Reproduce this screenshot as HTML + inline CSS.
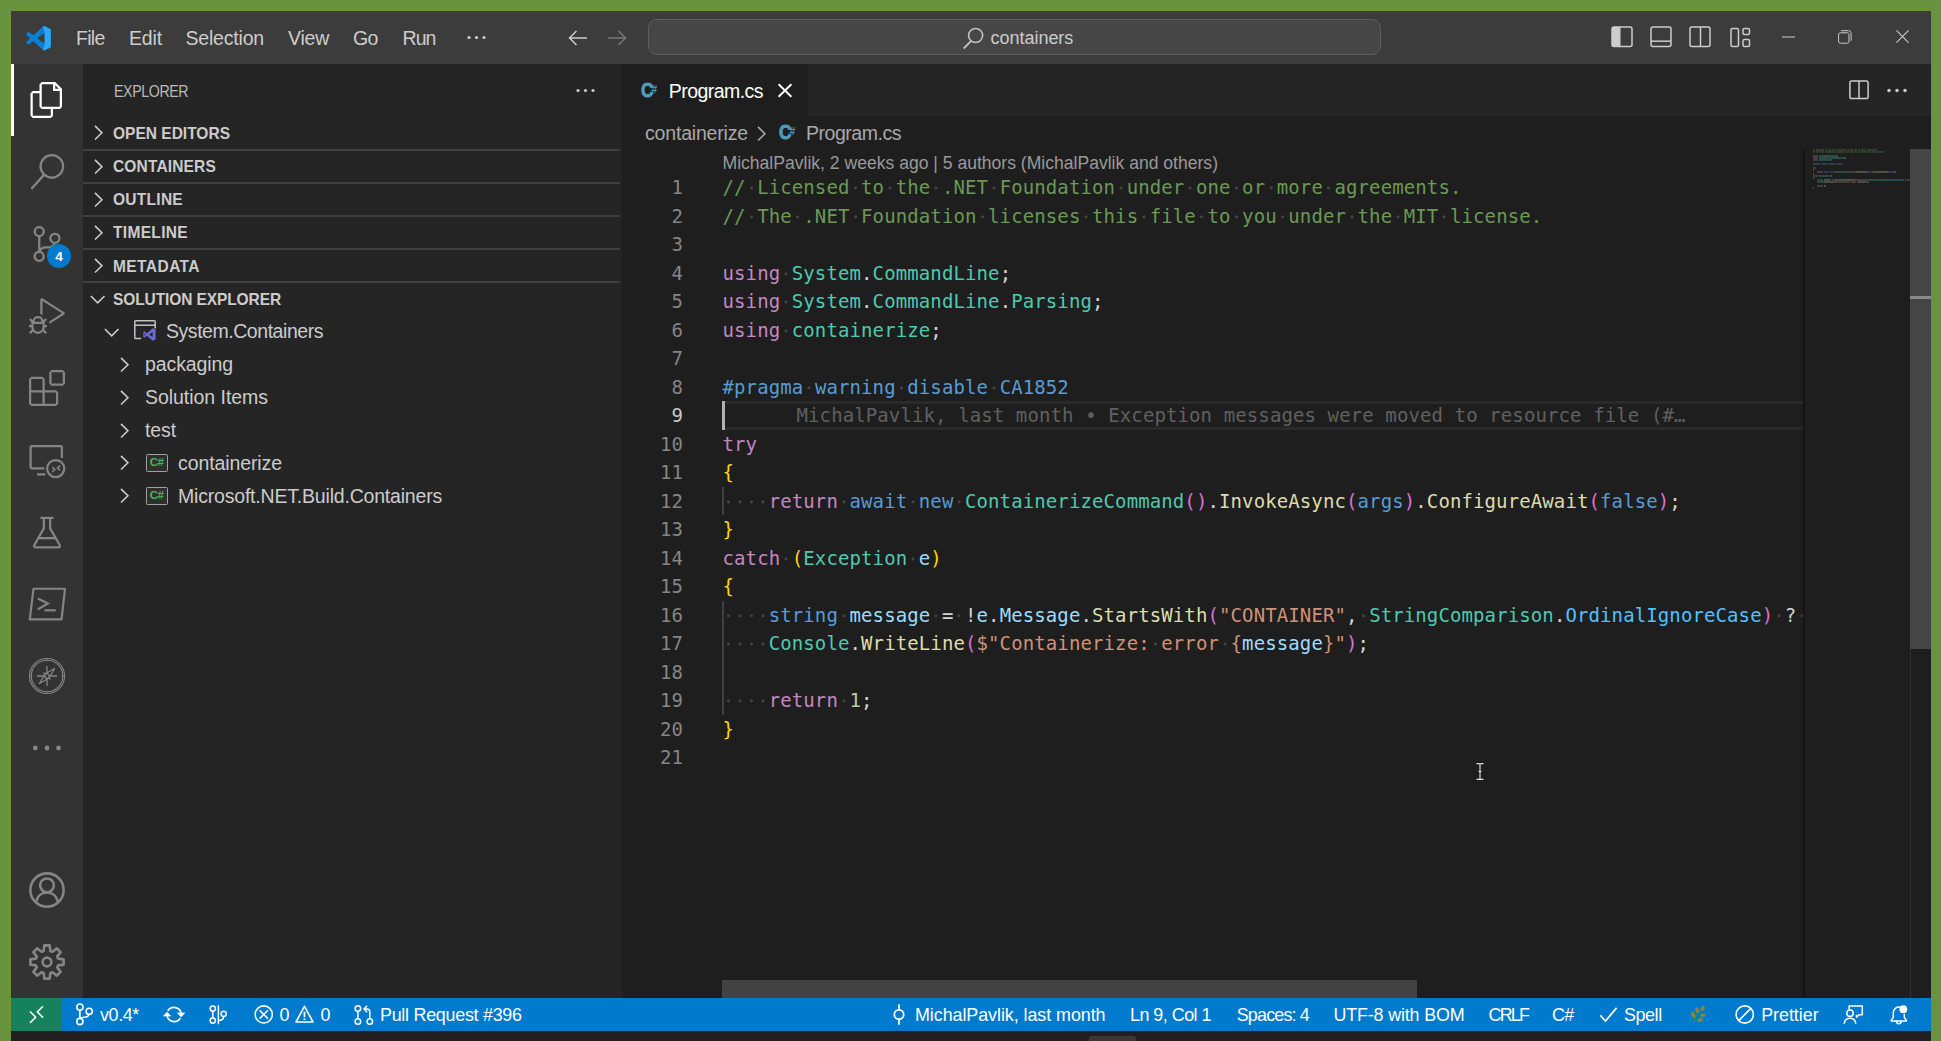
<!DOCTYPE html>
<html lang="en">
<head>
<meta charset="utf-8">
<title>Program.cs - containers - Visual Studio Code</title>
<style>
*{box-sizing:border-box;margin:0;padding:0}
html,body{width:1941px;height:1041px;overflow:hidden;background:#6a9340}
body{position:relative;font-family:"Liberation Sans",sans-serif;color:#cccccc}
.a{position:absolute}
.t{position:absolute;white-space:pre;display:block}
svg{position:absolute;overflow:visible;display:block}

.csproj{width:22px;height:18.5px;border:1.5px solid #a0a0a0;border-radius:1.5px;background:#2f2f30}
.csproj span{position:absolute;left:0;top:0;width:19px;height:15.5px;line-height:15.5px;text-align:center;font-size:11.5px;font-weight:700;color:#3fb950;letter-spacing:-0.6px}

.ln,.cl{position:absolute;height:28.5px;line-height:29.34px;font-family:"DejaVu Sans Mono","Liberation Mono",monospace;font-size:19.0px;letter-spacing:0.1070px;white-space:pre}
.ln{left:0.99px;width:60px;text-align:right}
.cl{left:100.50px}
.cl i{font-style:normal;background:radial-gradient(circle at 50% 54%,#424242 0,#424242 1.1px,rgba(66,66,66,0) 1.9px)}
.blame{color:#606060}
.c0{color:#6a9955}
.c1{color:#c586c0}
.c2{color:#d4d4d4}
.c3{color:#4ec9b0}
.c4{color:#569cd6}
.c5{color:#ffd700}
.c6{color:#da70d6}
.c7{color:#dcdcaa}
.c8{color:#9cdcfe}
.c9{color:#ce9178}
.c10{color:#4fc1ff}
.c11{color:#b5cea8}
</style>
</head>
<body>
<div id="win" class="a" style="left:11.00px;top:11.00px;width:1920px;height:1020px;background:#1e1e1e;overflow:hidden">
<div id="titlebar" class="a" style="left:0.00px;top:0.00px;width:1920px;height:53px;background:#3c3c3c">
<svg style="left:15.00px;top:15.00px" width="25" height="24.5" viewBox="0 0 100 100" ><path fill="#0b7fd1" d="M96.46 10.8 75.86.88a6.23 6.23 0 0 0-7.11 1.2L29.35 38.04 12.19 25.02a4.16 4.16 0 0 0-5.32.23l-5.5 5.01a4.17 4.17 0 0 0 0 6.17L16.25 50 1.36 63.57a4.17 4.17 0 0 0 0 6.17l5.51 5.01a4.16 4.16 0 0 0 5.32.23l17.16-13.02 39.4 35.96a6.23 6.23 0 0 0 7.11 1.2l20.61-9.92A6.25 6.25 0 0 0 100 83.57V16.43a6.25 6.25 0 0 0-3.54-5.63ZM75.02 72.7 45.1 50l29.92-22.7Z"/><path fill="#2aa7f5" d="M75.86.88a6.23 6.23 0 0 0-7.11 1.2l6.27 25.22V72.7L68.75 97.92a6.23 6.23 0 0 0 7.11 1.2l20.61-9.92A6.25 6.25 0 0 0 100 83.57V16.43a6.25 6.25 0 0 0-3.54-5.63Z"/></svg>
<span class="t" id="t1" style="left:65.00px;top:15.14px;height:25px;line-height:25px;font-size:19.5px;color:#cccccc;letter-spacing:-0.730px;">File</span>
<span class="t" id="t2" style="left:118.00px;top:15.14px;height:25px;line-height:25px;font-size:19.5px;color:#cccccc;letter-spacing:-0.152px;">Edit</span>
<span class="t" id="t3" style="left:174.50px;top:15.14px;height:25px;line-height:25px;font-size:19.5px;color:#cccccc;letter-spacing:-0.191px;">Selection</span>
<span class="t" id="t4" style="left:277.00px;top:15.14px;height:25px;line-height:25px;font-size:19.5px;color:#cccccc;letter-spacing:-0.230px;">View</span>
<span class="t" id="t5" style="left:342.00px;top:15.14px;height:25px;line-height:25px;font-size:19.5px;color:#cccccc;letter-spacing:-0.758px;">Go</span>
<span class="t" id="t6" style="left:391.50px;top:15.14px;height:25px;line-height:25px;font-size:19.5px;color:#cccccc;letter-spacing:-0.927px;">Run</span>
<svg style="left:456.00px;top:24.00px" width="19" height="5" viewBox="0 0 19 5" ><circle cx="2" cy="2.5" r="1.6" fill="#ccc"/><circle cx="9.5" cy="2.5" r="1.6" fill="#ccc"/><circle cx="17" cy="2.5" r="1.6" fill="#ccc"/></svg>
<svg style="left:557.00px;top:19.00px" width="19" height="16" viewBox="0 0 19 16" ><path d="M19 8H1.5M8.5 1 1.5 8l7 7" fill="none" stroke="#cccccc" stroke-width="1.5"/></svg>
<svg style="left:597.00px;top:19.00px" width="19" height="16" viewBox="0 0 19 16" ><path d="M0 8h17.5M10.5 1l7 7-7 7" fill="none" stroke="#777777" stroke-width="1.5"/></svg>
<div id="cmdcenter" class="a" style="left:637.00px;top:8.00px;width:733px;height:35.5px;background:#464646;border:1.5px solid #5d5d5d;border-radius:9px">
<svg style="left:313.00px;top:7.00px" width="22" height="23" viewBox="961 26 22 23" ><circle cx="974.600" cy="34.500" r="7" fill="none" stroke="#c2c2c2" stroke-width="1.6"/><path d="M970.100 39.900 962.700 47.500" stroke="#c2c2c2" stroke-width="1.8" fill="none"/></svg>
<span class="t" id="t7" style="left:341.60px;top:6.86px;height:23px;line-height:23px;font-size:18px;color:#cccccc;letter-spacing:-0.036px;">containers</span>
</div>
<svg style="left:1600.00px;top:15.00px" width="22" height="21.5" viewBox="0 0 22 21.5" ><rect x="1" y="1" width="20" height="19.5" rx="2" fill="none" stroke="#ccc" stroke-width="1.5"/><path d="M1 1h8.5v19.5H1z" fill="#ccc"/></svg>
<svg style="left:1639.00px;top:15.00px" width="22" height="21.5" viewBox="0 0 22 21.5" ><rect x="1" y="1" width="20" height="19.5" rx="2" fill="none" stroke="#ccc" stroke-width="1.5"/><path d="M1 15.200h20" stroke="#ccc" stroke-width="1.500"/></svg>
<svg style="left:1678.00px;top:15.00px" width="22" height="21.5" viewBox="0 0 22 21.5" ><rect x="1" y="1" width="20" height="19.5" rx="2" fill="none" stroke="#ccc" stroke-width="1.5"/><path d="M11.5 1v19.5" stroke="#ccc" stroke-width="1.5"/></svg>
<svg style="left:1718.50px;top:15.50px" width="21" height="21" viewBox="0 0 21 21" ><rect x="1" y="1.5" width="7.5" height="18" rx="1.5" fill="none" stroke="#ccc" stroke-width="1.5"/><rect x="13" y="1.5" width="6.5" height="6" rx="1.5" fill="none" stroke="#ccc" stroke-width="1.5"/><rect x="13" y="12.5" width="6.5" height="7" rx="1.5" fill="none" stroke="#ccc" stroke-width="1.5"/></svg>
<svg style="left:1771.00px;top:25.00px" width="13" height="2" viewBox="0 0 13 2" ><path d="M0 1h13" stroke="#ccc" stroke-width="1"/></svg>
<svg style="left:1827.00px;top:19.00px" width="14" height="14" viewBox="0 0 14 14" ><rect x=".6" y="2.8" width="10.4" height="10.4" rx="1.800" fill="none" stroke="#ccc" stroke-width="1"/><path d="M3 .7h7.500a2.600 2.600 0 0 1 2.600 2.600v7.500" fill="none" stroke="#ccc" stroke-width="1"/></svg>
<svg style="left:1885.00px;top:19.00px" width="13" height="13" viewBox="0 0 13 13" ><path d="M.4.4l12.2 12.2M12.6.4.4 12.6" stroke="#ccc" stroke-width="1.100"/></svg>
</div>
<div id="activitybar" class="a" style="left:0.00px;top:53.00px;width:72px;height:934px;background:#333333">
<div class="a" style="left:0.00px;top:0.00px;width:3px;height:72px;background:#ffffff;"></div>
<svg style="left:18.00px;top:18.00px" width="36" height="36" viewBox="0 0 24 24" fill="#ffffff"><path d="M17.5 0h-9L7 1.5V6H2.5L1 7.5v15.07L2.5 24h12.07L16 22.57V18h4.7l1.3-1.43V4.5L17.5 0zm0 2.12l2.38 2.38H17.5V2.12zm-3 20.38h-12v-15H7v9.07L8.5 18h6v4.5zm6-6h-12v-15H16V6h4.5v10.5z"/></svg>
<svg style="left:18.00px;top:90.00px" width="36" height="36" viewBox="0 0 24 24" fill="#858585"><path d="M15.25 0a8.25 8.25 0 0 0-6.18 13.72L1 22.88l1.12 1 8.05-9.12A8.251 8.251 0 1 0 15.25.01V0zm0 15a6.75 6.75 0 1 1 0-13.5 6.75 6.75 0 0 1 0 13.5z"/></svg>
<svg style="left:18.00px;top:162.00px" width="36" height="36" viewBox="0 0 24 24" fill="#858585"><path d="M21.007 8.222A3.738 3.738 0 0 0 15.045 5.2a3.737 3.737 0 0 0 1.156 6.583 2.988 2.988 0 0 1-2.668 1.67h-2.99a4.456 4.456 0 0 0-2.989 1.165V7.4a3.737 3.737 0 1 0-1.494 0v9.117a3.776 3.776 0 1 0 1.816.099 2.99 2.99 0 0 1 2.668-1.667h2.99a4.484 4.484 0 0 0 4.223-3.039 3.736 3.736 0 0 0 3.25-3.687zM4.565 3.738a2.242 2.242 0 1 1 4.484 0 2.242 2.242 0 0 1-4.484 0zm4.484 16.441a2.242 2.242 0 1 1-4.484 0 2.242 2.242 0 0 1 4.484 0zm8.221-9.715a2.242 2.242 0 1 1 0-4.485 2.242 2.242 0 0 1 0 4.485z"/></svg>
<div class="a" id="scmbadge" style="left:36px;top:179.5px;width:24px;height:24px;border-radius:12px;background:#007acc;color:#fff;font-size:13.5px;font-weight:700;text-align:center;line-height:25.5px">4</div>
<svg style="left:18.00px;top:234.00px" width="36" height="36" viewBox="0 0 24 24" fill="#858585"><path d="M10.94 13.5l-1.32 1.32a3.73 3.73 0 0 0-7.24 0L1.06 13.5 0 14.56l1.72 1.72-.22.22V18H0v1.5h1.5v.08c.077.489.214.966.41 1.42L0 22.94 1.06 24l1.65-1.65A4.308 4.308 0 0 0 6 24a4.31 4.31 0 0 0 3.29-1.65L10.94 24 12 22.94 10.09 21c.198-.464.336-.951.41-1.45v-.1H12V18h-1.5v-1.5l-.22-.22L12 14.56l-1.06-1.06zM6 13.5a2.25 2.25 0 0 1 2.25 2.25h-4.5A2.25 2.25 0 0 1 6 13.5zm3 6a3.33 3.33 0 0 1-3 3 3.33 3.33 0 0 1-3-3v-2.25h6v2.25zm14.76-9.9v1.26L13.5 17.37V15.6l8.5-5.37L9 2v9.46a5.07 5.07 0 0 0-1.5-.72V.63L8.64 0l15.12 9.6z"/></svg>
<svg style="left:18.00px;top:306.00px" width="36" height="36" viewBox="0 0 24 24" fill="#858585"><path d="M13.5 1.5L15 0h7.5L24 1.5V9l-1.5 1.5H15L13.5 9V1.5zm1.5 0V9h7.5V1.5H15zM0 15V6l1.5-1.5H9L10.5 6v7.5H18l1.5 1.5v7.5L18 24H1.5L0 22.5V15zm9-1.5V6H1.5v7.5H9zM9 15H1.5v7.5H9V15zm1.5 7.5H18V15h-7.5v7.5z"/></svg>
<svg style="left:18.00px;top:378.00px" width="36" height="36" viewBox="0 0 24 24" fill="#858585"><g fill="none" stroke="#858585" stroke-width="1.5"><path d="M10.300 17.500H1.900a.85.85 0 0 1-.85-.85V3.550a.85.85 0 0 1 .85-.85h19.150a.85.85 0 0 1 .85.85v7.150"/><path d="M5.300 21.600h5.600"/><circle cx="17.800" cy="17.700" r="5.700"/><path d="M15.500 16.800l1.700 1.600-1.700 1.600M20.700 15.800l-1.700 1.600 1.700 1.600" stroke-width="1.100"/></g></svg>
<svg style="left:18.00px;top:450.00px" width="36" height="36" viewBox="0 0 24 24" fill="#858585"><g fill="none" stroke="#858585" stroke-width="1.5" stroke-linejoin="round"><path d="M7.600 2.600h8.800"/><path d="M9.900 2.600v7L3.500 20.800a1 1 0 0 0 .9 1.500h15.200a1 1 0 0 0 .9-1.500L14.100 9.600v-7"/><path d="M6 16.100h12"/></g></svg>
<svg style="left:18.00px;top:522.00px" width="36" height="36" viewBox="0 0 24 24" fill="#858585"><g fill="none" stroke="#858585" stroke-width="1.45" stroke-linejoin="round"><path d="M3 1.850h21l-2.300 20.400H.5z"/><path d="M5.900 8.300l6.700 3.400-6.700 3.900" stroke-linejoin="miter"/><path d="M10.300 16.200h7.500"/></g></svg>
<svg style="left:18.00px;top:594.00px" width="36" height="36" viewBox="0 0 24 24" fill="#858585"><g fill="none" stroke="#858585"><circle cx="12" cy="12" r="11.700" stroke-width="0.75"/><circle cx="12" cy="12" r="10.500" stroke-width="0.75"/><path d="M12 5.300v13.400M5.300 12h13.400" stroke-width="0.900"/><path d="M9.600 9.600l4.800 4.800" stroke-width="0.700"/><path d="M17.200 6.800 13.300 13.300 6.800 17.200 10.700 10.700z" stroke-width="0.800"/><circle cx="12" cy="12" r="1.500" stroke-width="0.800" fill="#333"/><path d="M12 .8v1.400M12 21.800v1.400M.8 12h1.400M21.800 12h1.400" stroke-width=".7"/></g></svg>
<svg style="left:18.00px;top:666.00px" width="36" height="36" viewBox="0 0 36 36" ><circle cx="6.3" cy="18" r="2.4" fill="#858585"/><circle cx="18" cy="18" r="2.4" fill="#858585"/><circle cx="29.5" cy="18" r="2.4" fill="#858585"/></svg>
<svg style="left:18.00px;top:808.00px" width="36" height="36" viewBox="0 0 24 24" ><g fill="none" stroke="#858585" stroke-width="1.7"><circle cx="12" cy="12" r="11.100"/><circle cx="12" cy="8.900" r="4.600"/><path d="M4.700 19.800c.9-3.700 3.700-6.200 7.300-6.200s6.400 2.500 7.300 6.200"/></g></svg>
<svg style="left:18.00px;top:880.00px" width="36" height="36" viewBox="0 0 24 24" ><g fill="none" stroke="#858585" stroke-width="1.75" stroke-linejoin="round"><path d="M19.36 9.74L23.06 10.25L23.06 13.75L19.36 14.26L18.80 15.60L21.06 18.58L18.58 21.06L15.60 18.80L14.26 19.36L13.75 23.06L10.25 23.06L9.74 19.36L8.40 18.80L5.42 21.06L2.94 18.58L5.20 15.60L4.64 14.26L0.94 13.75L0.94 10.25L4.64 9.74L5.20 8.40L2.94 5.42L5.42 2.94L8.40 5.20L9.74 4.64L10.25 0.94L13.75 0.94L14.26 4.64L15.60 5.20L18.58 2.94L21.06 5.42L18.80 8.40Z"/><circle cx="12" cy="12" r="2.900"/></g></svg>
</div>
<div id="sidebar" class="a" style="left:72.00px;top:53.00px;width:539px;height:934px;background:#252526">
<span class="t" id="t8" style="left:30.75px;top:16.78px;height:21px;line-height:21px;font-size:16.5px;color:#bbbbbb;letter-spacing:-0.442px;transform:scaleX(0.86);transform-origin:0 50%;">EXPLORER</span>
<svg style="left:493.00px;top:23.50px" width="19" height="5" viewBox="0 0 19 5" ><circle cx="2" cy="2.5" r="1.6" fill="#ccc"/><circle cx="9.5" cy="2.5" r="1.6" fill="#ccc"/><circle cx="17" cy="2.5" r="1.6" fill="#ccc"/></svg>
<span class="t" id="t9" style="left:30.00px;top:58.78px;height:21px;line-height:21px;font-size:16.5px;color:#cccccc;font-weight:700;letter-spacing:0.006px;transform:scaleX(0.94);transform-origin:0 50%;">OPEN EDITORS</span>
<svg style="left:11.00px;top:61.30px" width="9" height="15.4" viewBox="0 0 9 15.400" ><path d="M1 .9 7.900 7.700 1 14.500" fill="none" stroke="#cccccc" stroke-width="1.6"/></svg>
<div class="a" style="left:0.00px;top:84.70px;width:537px;height:2px;background:#3f3f40;"></div>
<span class="t" id="t10" style="left:30.00px;top:91.98px;height:21px;line-height:21px;font-size:16.5px;color:#cccccc;font-weight:700;letter-spacing:0.170px;transform:scaleX(0.94);transform-origin:0 50%;">CONTAINERS</span>
<svg style="left:11.00px;top:94.50px" width="9" height="15.4" viewBox="0 0 9 15.400" ><path d="M1 .9 7.900 7.700 1 14.500" fill="none" stroke="#cccccc" stroke-width="1.6"/></svg>
<div class="a" style="left:0.00px;top:117.85px;width:537px;height:2px;background:#3f3f40;"></div>
<span class="t" id="t11" style="left:30.00px;top:125.18px;height:21px;line-height:21px;font-size:16.5px;color:#cccccc;font-weight:700;letter-spacing:0.292px;transform:scaleX(0.94);transform-origin:0 50%;">OUTLINE</span>
<svg style="left:11.00px;top:127.70px" width="9" height="15.4" viewBox="0 0 9 15.400" ><path d="M1 .9 7.900 7.700 1 14.500" fill="none" stroke="#cccccc" stroke-width="1.6"/></svg>
<div class="a" style="left:0.00px;top:151.00px;width:537px;height:2px;background:#3f3f40;"></div>
<span class="t" id="t12" style="left:30.00px;top:158.38px;height:21px;line-height:21px;font-size:16.5px;color:#cccccc;font-weight:700;letter-spacing:0.348px;transform:scaleX(0.94);transform-origin:0 50%;">TIMELINE</span>
<svg style="left:11.00px;top:160.90px" width="9" height="15.4" viewBox="0 0 9 15.400" ><path d="M1 .9 7.900 7.700 1 14.500" fill="none" stroke="#cccccc" stroke-width="1.6"/></svg>
<div class="a" style="left:0.00px;top:184.15px;width:537px;height:2px;background:#3f3f40;"></div>
<span class="t" id="t13" style="left:30.00px;top:191.58px;height:21px;line-height:21px;font-size:16.5px;color:#cccccc;font-weight:700;letter-spacing:0.456px;transform:scaleX(0.94);transform-origin:0 50%;">METADATA</span>
<svg style="left:11.00px;top:194.10px" width="9" height="15.4" viewBox="0 0 9 15.400" ><path d="M1 .9 7.900 7.700 1 14.500" fill="none" stroke="#cccccc" stroke-width="1.6"/></svg>
<div class="a" style="left:0.00px;top:217.30px;width:537px;height:2px;background:#3f3f40;"></div>
<span class="t" id="t14" style="left:30.00px;top:224.78px;height:21px;line-height:21px;font-size:16.5px;color:#cccccc;font-weight:700;letter-spacing:-0.111px;transform:scaleX(0.94);transform-origin:0 50%;">SOLUTION EXPLORER</span>
<svg style="left:7.30px;top:230.70px" width="15.4" height="9" viewBox="0 0 15.400 9" ><path d="M.9 1 7.700 7.900 14.500 1" fill="none" stroke="#cccccc" stroke-width="1.6"/></svg>
<svg style="left:21.30px;top:263.70px" width="15.4" height="9" viewBox="0 0 15.400 9" ><path d="M.9 1 7.700 7.900 14.500 1" fill="none" stroke="#cccccc" stroke-width="1.6"/></svg>
<svg style="left:51.00px;top:256.00px" width="22" height="21" viewBox="0 0 22 21" ><path d="M.8 16.5V1.6a.8.8 0 0 1 .8-.8h18.8a.8.8 0 0 1 .8.8v7" fill="none" stroke="#c5c5c5" stroke-width="1.5"/><path d="M.8 5.2h20.4" stroke="#c5c5c5" stroke-width="1.5"/><path d="M.8 16.5v1.2a.8.8 0 0 0 .8.8h5.5" fill="none" stroke="#c5c5c5" stroke-width="1.5"/><path d="M21.6 9.400 18.700 8.200 12.900 13.200 10.400 11.300 9.300 11.800v5.400l1.100.5 2.500-1.900 5.800 5 2.900-1.200zM18.600 12v5l-3.300-2.500zM10.500 15.800v-2.600l1.400 1.300z" fill="#6a6ad6"/></svg>
<span class="t" id="t15" style="left:83.00px;top:254.74px;height:25px;line-height:25px;font-size:19.5px;color:#cccccc;letter-spacing:-0.455px;">System.Containers</span>
<svg style="left:36.80px;top:292.50px" width="9" height="15.4" viewBox="0 0 9 15.400" ><path d="M1 .9 7.900 7.700 1 14.500" fill="none" stroke="#cccccc" stroke-width="1.6"/></svg>
<span class="t" id="t16" style="left:62.00px;top:287.94px;height:25px;line-height:25px;font-size:19.5px;color:#cccccc;letter-spacing:-0.101px;">packaging</span>
<svg style="left:36.80px;top:325.50px" width="9" height="15.4" viewBox="0 0 9 15.400" ><path d="M1 .9 7.900 7.700 1 14.500" fill="none" stroke="#cccccc" stroke-width="1.6"/></svg>
<span class="t" id="t17" style="left:62.00px;top:320.94px;height:25px;line-height:25px;font-size:19.5px;color:#cccccc;letter-spacing:-0.040px;">Solution Items</span>
<svg style="left:36.80px;top:358.50px" width="9" height="15.4" viewBox="0 0 9 15.400" ><path d="M1 .9 7.900 7.700 1 14.500" fill="none" stroke="#cccccc" stroke-width="1.6"/></svg>
<span class="t" id="t18" style="left:62.00px;top:353.94px;height:25px;line-height:25px;font-size:19.5px;color:#cccccc;letter-spacing:-0.109px;">test</span>
<svg style="left:36.80px;top:391.40px" width="9" height="15.4" viewBox="0 0 9 15.400" ><path d="M1 .9 7.900 7.700 1 14.500" fill="none" stroke="#cccccc" stroke-width="1.6"/></svg>
<div class="a csproj" style="left:63px;top:389.90px"><span>C#</span></div>
<span class="t" id="t19" style="left:95.00px;top:386.84px;height:25px;line-height:25px;font-size:19.5px;color:#cccccc;letter-spacing:-0.096px;">containerize</span>
<svg style="left:36.80px;top:424.40px" width="9" height="15.4" viewBox="0 0 9 15.400" ><path d="M1 .9 7.900 7.700 1 14.500" fill="none" stroke="#cccccc" stroke-width="1.6"/></svg>
<div class="a csproj" style="left:63px;top:422.90px"><span>C#</span></div>
<span class="t" id="t20" style="left:95.00px;top:419.84px;height:25px;line-height:25px;font-size:19.5px;color:#cccccc;letter-spacing:-0.195px;">Microsoft.NET.Build.Containers</span>
</div>
<div id="editor" class="a" style="left:611.00px;top:53.00px;width:1309px;height:934px;background:#1e1e1e;overflow:hidden">
<div id="tabs" class="a" style="left:0.00px;top:0.00px;width:1309px;height:52px;background:#252526">
<div id="tab-active" class="a" style="left:0.00px;top:0.00px;width:186px;height:52px;background:#1e1e1e">
<span class="t" id="t21" style="left:19.30px;top:14.01px;height:25px;line-height:25px;font-size:19.6px;color:#519aba;font-weight:700;transform:scaleX(0.88);transform-origin:0 50%;-webkit-text-stroke:0.9px #519aba;">C</span>
<span class="t" id="t22" style="left:29.40px;top:18.53px;height:13px;line-height:13px;font-size:10px;color:#519aba;font-weight:700;">#</span>
<span class="t" id="t23" style="left:46.75px;top:14.94px;height:25px;line-height:25px;font-size:19.5px;color:#ffffff;letter-spacing:-0.545px;">Program.cs</span>
<svg style="left:156.00px;top:20.00px" width="14" height="13" viewBox="0 0 14 13" ><path d="M.6.3l12.800 12.400M13.400.300.600 12.700" stroke="#fff" stroke-width="1.9"/></svg>
</div>
<svg style="left:1226.50px;top:15.50px" width="20" height="19.5" viewBox="0 0 20 19.5" ><rect x=".9" y=".9" width="18.2" height="17.7" rx="1.8" fill="none" stroke="#ccc" stroke-width="1.5"/><path d="M10 .9v17.700" stroke="#ccc" stroke-width="1.5"/></svg>
<svg style="left:1265.00px;top:23.50px" width="20" height="5" viewBox="0 0 20 5" ><circle cx="2" cy="2.5" r="1.7" fill="#ccc"/><circle cx="10" cy="2.5" r="1.7" fill="#ccc"/><circle cx="18" cy="2.5" r="1.7" fill="#ccc"/></svg>
</div>
<div id="breadcrumbs" class="a" style="left:0.00px;top:52.00px;width:1309px;height:33.5px;background:#1e1e1e">
<span class="t" id="t24" style="left:23.00px;top:4.94px;height:25px;line-height:25px;font-size:19.5px;color:#a9a9a9;letter-spacing:-0.180px;">containerize</span>
<svg style="left:135.00px;top:9.50px" width="9" height="15.4" viewBox="0 0 9 15.400" ><path d="M1 .9 7.900 7.700 1 14.500" fill="none" stroke="#a9a9a9" stroke-width="1.6"/></svg>
<span class="t" id="t25" style="left:157.30px;top:4.41px;height:25px;line-height:25px;font-size:19.6px;color:#519aba;font-weight:700;transform:scaleX(0.88);transform-origin:0 50%;-webkit-text-stroke:0.9px #519aba;">C</span>
<span class="t" id="t26" style="left:167.40px;top:8.93px;height:13px;line-height:13px;font-size:10px;color:#519aba;font-weight:700;">#</span>
<span class="t" id="t27" style="left:184.00px;top:4.94px;height:25px;line-height:25px;font-size:19.5px;color:#a9a9a9;letter-spacing:-0.470px;">Program.cs</span>
</div>
<div id="code" class="a" style="left:0.00px;top:85.50px;width:1181px;height:830.5px;overflow:hidden">
<span class="t" id="codelens" style="left:100.50px;top:2.30px;height:23px;line-height:23px;font-size:17.6px;color:#999999;letter-spacing:-0.015px;">MichalPavlik, 2 weeks ago | 5 authors (MichalPavlik and others)</span>
<div class="a" style="left:100.00px;top:251.50px;width:1081px;height:29px;background:transparent;border-top:3px solid #2a2a2a;border-bottom:3px solid #2a2a2a"></div>
<div class="a" style="left:100.00px;top:251.50px;width:3px;height:29px;background:#b4adb3;"></div>
<div class="a" style="left:100.30px;top:337.25px;width:1.5px;height:28.5px;background:#404040;"></div>
<div class="a" style="left:100.30px;top:451.25px;width:1.5px;height:114.0px;background:#404040;"></div>
<div class="ln" style="top:23.75px;color:#858585">1</div>
<div class="cl" style="top:23.75px"><span class="c0">//<i> </i>Licensed<i> </i>to<i> </i>the<i> </i>.NET<i> </i>Foundation<i> </i>under<i> </i>one<i> </i>or<i> </i>more<i> </i>agreements.</span></div>
<div class="ln" style="top:52.25px;color:#858585">2</div>
<div class="cl" style="top:52.25px"><span class="c0">//<i> </i>The<i> </i>.NET<i> </i>Foundation<i> </i>licenses<i> </i>this<i> </i>file<i> </i>to<i> </i>you<i> </i>under<i> </i>the<i> </i>MIT<i> </i>license.</span></div>
<div class="ln" style="top:80.75px;color:#858585">3</div>
<div class="ln" style="top:109.25px;color:#858585">4</div>
<div class="cl" style="top:109.25px"><span class="c1">using</span><span class="c2"><i> </i></span><span class="c3">System</span><span class="c2">.</span><span class="c3">CommandLine</span><span class="c2">;</span></div>
<div class="ln" style="top:137.75px;color:#858585">5</div>
<div class="cl" style="top:137.75px"><span class="c1">using</span><span class="c2"><i> </i></span><span class="c3">System</span><span class="c2">.</span><span class="c3">CommandLine</span><span class="c2">.</span><span class="c3">Parsing</span><span class="c2">;</span></div>
<div class="ln" style="top:166.25px;color:#858585">6</div>
<div class="cl" style="top:166.25px"><span class="c1">using</span><span class="c2"><i> </i></span><span class="c3">containerize</span><span class="c2">;</span></div>
<div class="ln" style="top:194.75px;color:#858585">7</div>
<div class="ln" style="top:223.25px;color:#858585">8</div>
<div class="cl" style="top:223.25px"><span class="c4">#pragma<i> </i>warning<i> </i>disable<i> </i>CA1852</span></div>
<div class="ln" style="top:251.75px;color:#c6c6c6">9</div>
<div class="cl blame" style="top:251.75px;left:174.50px">MichalPavlik, last month • Exception messages were moved to resource file (#…</div>
<div class="ln" style="top:280.25px;color:#858585">10</div>
<div class="cl" style="top:280.25px"><span class="c1">try</span></div>
<div class="ln" style="top:308.75px;color:#858585">11</div>
<div class="cl" style="top:308.75px"><span class="c5">{</span></div>
<div class="ln" style="top:337.25px;color:#858585">12</div>
<div class="cl" style="top:337.25px"><span class="c2"><i> </i><i> </i><i> </i><i> </i></span><span class="c1">return</span><span class="c2"><i> </i></span><span class="c4">await</span><span class="c2"><i> </i></span><span class="c4">new</span><span class="c2"><i> </i></span><span class="c3">ContainerizeCommand</span><span class="c6">()</span><span class="c2">.</span><span class="c7">InvokeAsync</span><span class="c6">(</span><span class="c4">args</span><span class="c6">)</span><span class="c2">.</span><span class="c7">ConfigureAwait</span><span class="c6">(</span><span class="c4">false</span><span class="c6">)</span><span class="c2">;</span></div>
<div class="ln" style="top:365.75px;color:#858585">13</div>
<div class="cl" style="top:365.75px"><span class="c5">}</span></div>
<div class="ln" style="top:394.25px;color:#858585">14</div>
<div class="cl" style="top:394.25px"><span class="c1">catch</span><span class="c2"><i> </i></span><span class="c5">(</span><span class="c3">Exception</span><span class="c2"><i> </i></span><span class="c8">e</span><span class="c5">)</span></div>
<div class="ln" style="top:422.75px;color:#858585">15</div>
<div class="cl" style="top:422.75px"><span class="c5">{</span></div>
<div class="ln" style="top:451.25px;color:#858585">16</div>
<div class="cl" style="top:451.25px"><span class="c2"><i> </i><i> </i><i> </i><i> </i></span><span class="c4">string</span><span class="c2"><i> </i></span><span class="c8">message</span><span class="c2"><i> </i></span><span class="c2">=</span><span class="c2"><i> </i></span><span class="c2">!</span><span class="c8">e</span><span class="c2">.</span><span class="c8">Message</span><span class="c2">.</span><span class="c7">StartsWith</span><span class="c6">(</span><span class="c9">"CONTAINER"</span><span class="c2">,</span><span class="c2"><i> </i></span><span class="c3">StringComparison</span><span class="c2">.</span><span class="c10">OrdinalIgnoreCase</span><span class="c6">)</span><span class="c2"><i> </i></span><span class="c2">?</span><span class="c2"><i> </i></span><span class="c9">$"CONTAINER9000:<i> </i>"</span><span class="c2"><i> </i></span><span class="c2">+</span><span class="c2"><i> </i></span><span class="c8">e</span><span class="c2">.</span><span class="c7">ToString</span><span class="c6">()</span><span class="c2"><i> </i></span><span class="c2">:</span><span class="c2"><i> </i></span><span class="c8">e</span><span class="c2">.</span><span class="c7">ToString</span><span class="c6">()</span><span class="c2">;</span></div>
<div class="ln" style="top:479.75px;color:#858585">17</div>
<div class="cl" style="top:479.75px"><span class="c2"><i> </i><i> </i><i> </i><i> </i></span><span class="c3">Console</span><span class="c2">.</span><span class="c7">WriteLine</span><span class="c6">(</span><span class="c9">$"Containerize:<i> </i>error<i> </i></span><span class="c9">{</span><span class="c8">message</span><span class="c9">}</span><span class="c9">"</span><span class="c6">)</span><span class="c2">;</span></div>
<div class="ln" style="top:508.25px;color:#858585">18</div>
<div class="ln" style="top:536.75px;color:#858585">19</div>
<div class="cl" style="top:536.75px"><span class="c2"><i> </i><i> </i><i> </i><i> </i></span><span class="c1">return</span><span class="c2"><i> </i></span><span class="c11">1</span><span class="c2">;</span></div>
<div class="ln" style="top:565.25px;color:#858585">20</div>
<div class="cl" style="top:565.25px"><span class="c5">}</span></div>
<div class="ln" style="top:593.75px;color:#858585">21</div>
</div>
<div class="a" style="left:1179.00px;top:85.50px;width:4px;height:848.5px;background:linear-gradient(90deg,rgba(0,0,0,0),rgba(0,0,0,.45));"></div>
<svg style="left:1191.00px;top:84.80px" width="97" height="44" viewBox="0 0 97 44" ><g opacity=".4"><rect x="0" y="0.3" width="2" height="1.3" fill="#6a9955"/><rect x="3" y="0.3" width="8" height="1.3" fill="#6a9955"/><rect x="12" y="0.3" width="2" height="1.3" fill="#6a9955"/><rect x="15" y="0.3" width="3" height="1.3" fill="#6a9955"/><rect x="19" y="0.3" width="4" height="1.3" fill="#6a9955"/><rect x="24" y="0.3" width="10" height="1.3" fill="#6a9955"/><rect x="35" y="0.3" width="5" height="1.3" fill="#6a9955"/><rect x="41" y="0.3" width="3" height="1.3" fill="#6a9955"/><rect x="45" y="0.3" width="2" height="1.3" fill="#6a9955"/><rect x="48" y="0.3" width="4" height="1.3" fill="#6a9955"/><rect x="53" y="0.3" width="11" height="1.3" fill="#6a9955"/><rect x="0" y="2.3" width="2" height="1.3" fill="#6a9955"/><rect x="3" y="2.3" width="3" height="1.3" fill="#6a9955"/><rect x="7" y="2.3" width="4" height="1.3" fill="#6a9955"/><rect x="12" y="2.3" width="10" height="1.3" fill="#6a9955"/><rect x="23" y="2.3" width="8" height="1.3" fill="#6a9955"/><rect x="32" y="2.3" width="4" height="1.3" fill="#6a9955"/><rect x="37" y="2.3" width="4" height="1.3" fill="#6a9955"/><rect x="42" y="2.3" width="2" height="1.3" fill="#6a9955"/><rect x="45" y="2.3" width="3" height="1.3" fill="#6a9955"/><rect x="49" y="2.3" width="5" height="1.3" fill="#6a9955"/><rect x="55" y="2.3" width="3" height="1.3" fill="#6a9955"/><rect x="59" y="2.3" width="3" height="1.3" fill="#6a9955"/><rect x="63" y="2.3" width="8" height="1.3" fill="#6a9955"/><rect x="0" y="6.3" width="5" height="1.3" fill="#c586c0"/><rect x="6" y="6.3" width="6" height="1.3" fill="#4ec9b0"/><rect x="12" y="6.3" width="1" height="1.3" fill="#d4d4d4"/><rect x="13" y="6.3" width="11" height="1.3" fill="#4ec9b0"/><rect x="24" y="6.3" width="1" height="1.3" fill="#d4d4d4"/><rect x="0" y="8.3" width="5" height="1.3" fill="#c586c0"/><rect x="6" y="8.3" width="6" height="1.3" fill="#4ec9b0"/><rect x="12" y="8.3" width="1" height="1.3" fill="#d4d4d4"/><rect x="13" y="8.3" width="11" height="1.3" fill="#4ec9b0"/><rect x="24" y="8.3" width="1" height="1.3" fill="#d4d4d4"/><rect x="25" y="8.3" width="7" height="1.3" fill="#4ec9b0"/><rect x="32" y="8.3" width="1" height="1.3" fill="#d4d4d4"/><rect x="0" y="10.3" width="5" height="1.3" fill="#c586c0"/><rect x="6" y="10.3" width="12" height="1.3" fill="#4ec9b0"/><rect x="18" y="10.3" width="1" height="1.3" fill="#d4d4d4"/><rect x="0" y="14.3" width="7" height="1.3" fill="#569cd6"/><rect x="8" y="14.3" width="7" height="1.3" fill="#569cd6"/><rect x="16" y="14.3" width="7" height="1.3" fill="#569cd6"/><rect x="24" y="14.3" width="6" height="1.3" fill="#569cd6"/><rect x="0" y="18.3" width="3" height="1.3" fill="#c586c0"/><rect x="0" y="20.3" width="1" height="1.3" fill="#ffd700"/><rect x="4" y="22.3" width="6" height="1.3" fill="#c586c0"/><rect x="11" y="22.3" width="5" height="1.3" fill="#569cd6"/><rect x="17" y="22.3" width="3" height="1.3" fill="#569cd6"/><rect x="21" y="22.3" width="19" height="1.3" fill="#4ec9b0"/><rect x="40" y="22.3" width="2" height="1.3" fill="#da70d6"/><rect x="42" y="22.3" width="1" height="1.3" fill="#d4d4d4"/><rect x="43" y="22.3" width="11" height="1.3" fill="#dcdcaa"/><rect x="54" y="22.3" width="1" height="1.3" fill="#da70d6"/><rect x="55" y="22.3" width="4" height="1.3" fill="#569cd6"/><rect x="59" y="22.3" width="1" height="1.3" fill="#da70d6"/><rect x="60" y="22.3" width="1" height="1.3" fill="#d4d4d4"/><rect x="61" y="22.3" width="14" height="1.3" fill="#dcdcaa"/><rect x="75" y="22.3" width="1" height="1.3" fill="#da70d6"/><rect x="76" y="22.3" width="5" height="1.3" fill="#569cd6"/><rect x="81" y="22.3" width="1" height="1.3" fill="#da70d6"/><rect x="82" y="22.3" width="1" height="1.3" fill="#d4d4d4"/><rect x="0" y="24.3" width="1" height="1.3" fill="#ffd700"/><rect x="0" y="26.3" width="5" height="1.3" fill="#c586c0"/><rect x="6" y="26.3" width="1" height="1.3" fill="#ffd700"/><rect x="7" y="26.3" width="9" height="1.3" fill="#4ec9b0"/><rect x="17" y="26.3" width="1" height="1.3" fill="#9cdcfe"/><rect x="18" y="26.3" width="1" height="1.3" fill="#ffd700"/><rect x="0" y="28.3" width="1" height="1.3" fill="#ffd700"/><rect x="4" y="30.3" width="6" height="1.3" fill="#569cd6"/><rect x="11" y="30.3" width="7" height="1.3" fill="#9cdcfe"/><rect x="19" y="30.3" width="1" height="1.3" fill="#d4d4d4"/><rect x="21" y="30.3" width="1" height="1.3" fill="#d4d4d4"/><rect x="22" y="30.3" width="1" height="1.3" fill="#9cdcfe"/><rect x="23" y="30.3" width="1" height="1.3" fill="#d4d4d4"/><rect x="24" y="30.3" width="7" height="1.3" fill="#9cdcfe"/><rect x="31" y="30.3" width="1" height="1.3" fill="#d4d4d4"/><rect x="32" y="30.3" width="10" height="1.3" fill="#dcdcaa"/><rect x="42" y="30.3" width="1" height="1.3" fill="#da70d6"/><rect x="43" y="30.3" width="11" height="1.3" fill="#ce9178"/><rect x="54" y="30.3" width="1" height="1.3" fill="#d4d4d4"/><rect x="56" y="30.3" width="16" height="1.3" fill="#4ec9b0"/><rect x="72" y="30.3" width="1" height="1.3" fill="#d4d4d4"/><rect x="73" y="30.3" width="17" height="1.3" fill="#4fc1ff"/><rect x="90" y="30.3" width="1" height="1.3" fill="#da70d6"/><rect x="92" y="30.3" width="1" height="1.3" fill="#d4d4d4"/><rect x="94" y="30.3" width="3" height="1.3" fill="#ce9178"/><rect x="4" y="32.3" width="7" height="1.3" fill="#4ec9b0"/><rect x="11" y="32.3" width="1" height="1.3" fill="#d4d4d4"/><rect x="12" y="32.3" width="9" height="1.3" fill="#dcdcaa"/><rect x="21" y="32.3" width="1" height="1.3" fill="#da70d6"/><rect x="22" y="32.3" width="15" height="1.3" fill="#ce9178"/><rect x="38" y="32.3" width="5" height="1.3" fill="#ce9178"/><rect x="44" y="32.3" width="1" height="1.3" fill="#ce9178"/><rect x="45" y="32.3" width="7" height="1.3" fill="#9cdcfe"/><rect x="52" y="32.3" width="1" height="1.3" fill="#ce9178"/><rect x="53" y="32.3" width="1" height="1.3" fill="#ce9178"/><rect x="54" y="32.3" width="1" height="1.3" fill="#da70d6"/><rect x="55" y="32.3" width="1" height="1.3" fill="#d4d4d4"/><rect x="4" y="36.3" width="6" height="1.3" fill="#c586c0"/><rect x="11" y="36.3" width="1" height="1.3" fill="#b5cea8"/><rect x="12" y="36.3" width="1" height="1.3" fill="#d4d4d4"/><rect x="0" y="38.3" width="1" height="1.3" fill="#ffd700"/></g></svg>
<div class="a" style="left:1288.00px;top:85.50px;width:21px;height:848.5px;background:#1e1e1e;border-left:1px solid #303030"></div>
<div class="a" style="left:1288.00px;top:84.80px;width:21px;height:500.2px;background:#454545;"></div>
<div class="a" style="left:1288.00px;top:232.00px;width:21px;height:2.5px;background:#8a8a8a;"></div>
<div class="a" style="left:100.00px;top:916.00px;width:695px;height:18px;background:#424242;"></div>
<svg style="left:853.50px;top:699.00px" width="8" height="17" viewBox="0 0 8 17" ><path d="M.5.600h2.500q1 0 1 1v13.800q0 1-1 1H.5M7.500.600H5q-1 0-1 1v13.800q0 1 1 1h2.500M2.500 8.500h3" fill="none" stroke="#e0e0e0" stroke-width="1.1"/></svg>
</div>
<div id="statusbar" class="a" style="left:0.00px;top:987.00px;width:1920px;height:33px;background:#007acc;color:#fff">
<div class="a" style="left:0.00px;top:0.00px;width:51px;height:33px;background:#16825d;"></div>
<svg style="left:17.00px;top:6.00px" width="18" height="21" viewBox="28 1004 18 21" ><g fill="none" stroke="#fff" stroke-width="1.6" stroke-linejoin="round"><path d="M43 1006.2l-5.700 5.700 5.700 5.700M30 1011.500l5.700 5.700-5.700 5.700" stroke-width="1.5"/></g></svg>
<svg style="left:64.00px;top:5.00px" width="19" height="23" viewBox="75 1003 19 23" ><g fill="none" stroke="#fff" stroke-width="1.6" stroke-linejoin="round"><circle cx="79.900" cy="1007.100" r="3.100"/><circle cx="79.900" cy="1021.500" r="3.100"/><circle cx="89.200" cy="1011.300" r="3.100"/><path d="M79.900 1010.200v8.200M88.900 1014.400c-.4 2.300-2.400 2.900-4.600 2.900-1.800 0-3.400.6-4.100 1.500"/></g></svg>
<span class="t" id="t29" style="left:89.10px;top:5.79px;height:23px;line-height:23px;font-size:17.9px;color:#ffffff;letter-spacing:-0.416px;">v0.4*</span>
<svg style="left:151.00px;top:6.00px" width="24" height="21" viewBox="162 1004 24 21" ><g fill="none" stroke="#fff" stroke-width="1.6" stroke-linejoin="round"><path d="M167.79999999999998 1011.0A7.2 7.2 0 0 1 181.2 1014.1"/><path d="M180.4 1018.0A7.2 7.2 0 0 1 167.0 1014.9"/><path d="M177.4 1012.9h7.4l-3.700 4z" fill="#fff" stroke-width=".6"/><path d="M170.79999999999998 1016.1h-7.400l3.700-4z" fill="#fff" stroke-width=".6"/></g></svg>
<svg style="left:197.00px;top:5.00px" width="21" height="23" viewBox="208 1003 21 23" ><g fill="none" stroke="#fff" stroke-width="1.5" stroke-linejoin="round"><circle cx="212.800" cy="1008.500" r="2.600"/><circle cx="212.800" cy="1020.600" r="2.600"/><circle cx="223.700" cy="1013.800" r="2.600"/><path d="M212.800 1011.100v6.900M218.400 1005.300v19M223.700 1016.400c0 2.600-2 3.900-5.300 4"/></g></svg>
<svg style="left:242.00px;top:6.00px" width="22" height="21" viewBox="253 1004 22 21" ><g fill="none" stroke="#fff" stroke-width="1.6" stroke-linejoin="round"><circle cx="263.750" cy="1014.400" r="8.550"/><path d="M259.600 1010.200l8.300 8.400M267.900 1010.200l-8.300 8.400"/></g></svg>
<span class="t" id="t30" style="left:268.60px;top:5.79px;height:23px;line-height:23px;font-size:17.9px;color:#ffffff;letter-spacing:-0.953px;">0</span>
<svg style="left:283.00px;top:6.00px" width="21" height="20" viewBox="294 1004 21 20" ><g fill="none" stroke="#fff" stroke-width="1.6" stroke-linejoin="round"><path d="M304.500 1006.300 313 1022H296z"/><path d="M304.500 1011.800v5.400M304.500 1018.600v1.300" stroke-width="1.8"/></g></svg>
<span class="t" id="t31" style="left:309.40px;top:5.79px;height:23px;line-height:23px;font-size:17.9px;color:#ffffff;letter-spacing:-0.953px;">0</span>
<svg style="left:342.00px;top:6.00px" width="22" height="22" viewBox="353 1004 22 22" ><g fill="none" stroke="#fff" stroke-width="1.5" stroke-linejoin="round"><circle cx="357.900" cy="1008.600" r="2.750"/><circle cx="357.900" cy="1021.600" r="2.750"/><circle cx="369.800" cy="1021.600" r="2.750"/><path d="M357.900 1011.400v7.400M369.800 1018.800v-6.800a3 3 0 0 0-3-3h-2.700M367.200 1005.700l-3.300 3.300 3.300 3.300"/></g></svg>
<span class="t" id="t32" style="left:369.00px;top:5.79px;height:23px;line-height:23px;font-size:17.9px;color:#ffffff;letter-spacing:-0.263px;">Pull Request #396</span>
<svg style="left:881.00px;top:5.00px" width="14" height="23" viewBox="892 1003 14 23" ><g fill="none" stroke="#fff" stroke-width="1.7" stroke-linejoin="round"><circle cx="899" cy="1014.500" r="4.700"/><path d="M899 1004.200v5.600M899 1019.200v5.600"/></g></svg>
<span class="t" id="t33" style="left:904.00px;top:5.79px;height:23px;line-height:23px;font-size:17.9px;color:#ffffff;letter-spacing:-0.059px;">MichalPavlik, last month</span>
<span class="t" id="t34" style="left:1119.00px;top:5.79px;height:23px;line-height:23px;font-size:17.9px;color:#ffffff;letter-spacing:-0.503px;">Ln 9, Col 1</span>
<span class="t" id="t35" style="left:1225.75px;top:5.79px;height:23px;line-height:23px;font-size:17.9px;color:#ffffff;letter-spacing:-0.814px;">Spaces: 4</span>
<span class="t" id="t36" style="left:1322.40px;top:5.79px;height:23px;line-height:23px;font-size:17.9px;color:#ffffff;letter-spacing:-0.143px;">UTF-8 with BOM</span>
<span class="t" id="t37" style="left:1477.60px;top:5.79px;height:23px;line-height:23px;font-size:17.9px;color:#ffffff;letter-spacing:-1.830px;">CRLF</span>
<span class="t" id="t38" style="left:1541.00px;top:5.79px;height:23px;line-height:23px;font-size:17.9px;color:#ffffff;letter-spacing:-0.587px;">C#</span>
<svg style="left:1588.00px;top:8.00px" width="19" height="17" viewBox="1599 1006 19 17" ><g fill="none" stroke="#fff" stroke-width="1.7" stroke-linejoin="round"><path d="M1600.300 1015.400l5.200 5.600 11.100-13.100" stroke-linejoin="miter"/></g></svg>
<span class="t" id="t39" style="left:1613.00px;top:5.79px;height:23px;line-height:23px;font-size:17.9px;color:#ffffff;letter-spacing:-0.419px;">Spell</span>
<svg style="left:1679.00px;top:7.00px" width="17" height="19" viewBox="1690 1005 17 19" ><path d="M1693.400 1023.300c1.200-6 4.200-11.700 8.900-16.300" fill="none" stroke="#4f8f33" stroke-width="1"/><g fill="#a07f2d" stroke="#5f9a38" stroke-width=".5"><ellipse cx="1702.600" cy="1008.600" rx="1.500" ry="2.800" transform="rotate(25 1702.600 1008.600)"/><ellipse cx="1697.200" cy="1010.400" rx="1.500" ry="2.700" transform="rotate(-20 1697.200 1010.400)"/><ellipse cx="1693.200" cy="1014.800" rx="1.600" ry="3" transform="rotate(-20 1693.200 1014.800)"/><ellipse cx="1702.900" cy="1015.300" rx="1.400" ry="2.800" transform="rotate(80 1702.900 1015.300)"/><ellipse cx="1700" cy="1020.100" rx="1.500" ry="3" transform="rotate(75 1700 1020.100)"/></g></svg>
<svg style="left:1723.00px;top:6.00px" width="22" height="21" viewBox="1734 1004 22 21" ><g fill="none" stroke="#fff" stroke-width="1.6" stroke-linejoin="round"><circle cx="1744.750" cy="1014.500" r="8.600"/><path d="M1738.700 1020.600l12.100-12.200"/></g></svg>
<span class="t" id="t40" style="left:1750.20px;top:5.79px;height:23px;line-height:23px;font-size:17.9px;color:#ffffff;letter-spacing:-0.034px;">Prettier</span>
<svg style="left:1831.00px;top:6.00px" width="23" height="21" viewBox="1842 1004 23 21" ><g fill="none" stroke="#fff" stroke-width="1.5" stroke-linejoin="round"><path d="M1849.100 1009.600v-3.600h13.200v8.700h-3.200l-2.600 2.600v-2.600"/><circle cx="1850" cy="1013.300" r="3.200"/><path d="M1844.200 1023.700c.3-3.300 2.500-5.500 5.800-5.500s5.500 2.200 5.800 5.500"/></g></svg>
<svg style="left:1877.00px;top:6.00px" width="22" height="22" viewBox="1888 1004 22 22" ><g fill="none" stroke="#fff" stroke-width="1.5" stroke-linejoin="round"><path d="M1900 1007.200a5.600 5.600 0 0 0-6.700 5.500v4.700l-2.100 3v.7h15.200v-.7l-2.100-3v-3.600M1896.400 1021.300a2.400 2.400 0 0 0 4.800 0"/><circle cx="1903.300" cy="1009.200" r="3.900" fill="#fff" stroke="none"/></g></svg>
</div>
</div>
<div id="desk" class="a" style="left:11px;top:1031px;width:1920px;height:10px;background:#231f20"><div class="a" style="left:1078px;top:5px;width:47px;height:5px;background:#3b3735;border-radius:3px 3px 0 0"></div></div>
</body>
</html>
